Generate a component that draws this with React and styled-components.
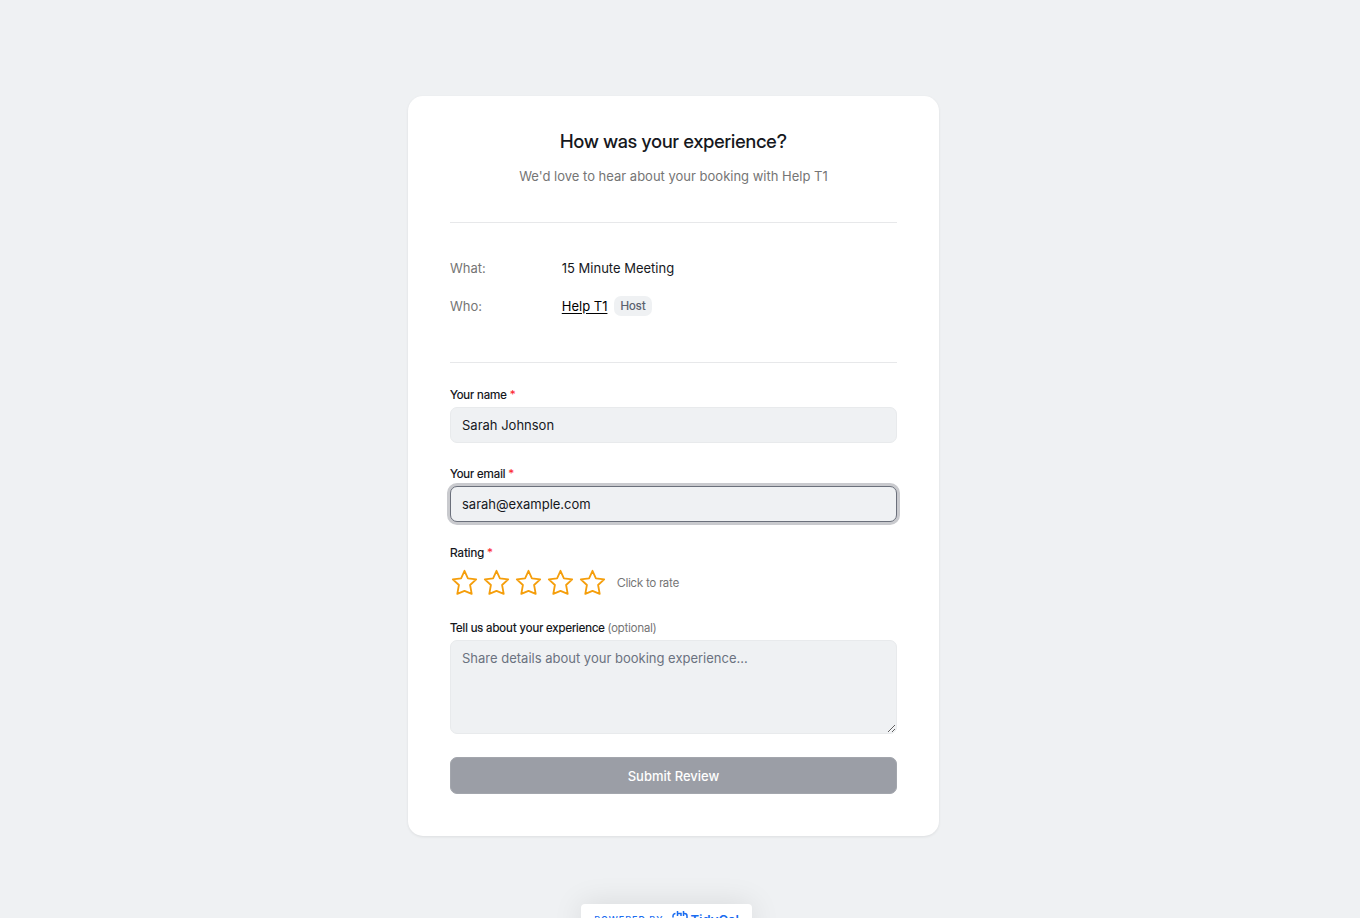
import React, { useState } from 'react'
import styled, { createGlobalStyle } from 'styled-components'

const displayFont = "'Inter Display', Inter, 'Liberation Sans', sans-serif"

const GlobalStyle = createGlobalStyle`
  *, *::before, *::after {
    box-sizing: border-box;
  }
  body {
    margin: 0;
    background: #eff1f3;
    color: #16181d;
    font-family: Inter, 'Liberation Sans', sans-serif;
    font-size: 13px;
    line-height: 20px;
    scrollbar-width: none;
  }
  button, input, textarea {
    font: inherit;
    color: inherit;
  }
`

const Page = styled.div`
  display: flex;
  flex-direction: column;
  align-items: center;
  min-height: 100vh;
  padding: 96px 29px 24px 16px;
`

const Card = styled.main`
  width: 100%;
  max-width: 531px;
  padding: 36px 42px 42px;
  background: #fff;
  border-radius: 15px;
  box-shadow: 0 1px 3px rgba(0, 0, 0, 0.08);
`

const Header = styled.header`
  padding-bottom: 36px;
  border-bottom: 1px solid #e7e8ea;
  text-align: center;
`

const Title = styled.h1`
  margin: 0 0 14px;
  font-family: ${displayFont};
  font-size: 19px;
  font-weight: 500;
  line-height: 20px;
`

const Subtitle = styled.p`
  margin: 0;
  color: #757575;
`

const Details = styled.dl`
  display: grid;
  grid-template-columns: 1fr 3fr;
  row-gap: 18px;
  margin: 0;
  padding: 35px 0 46px;
  border-bottom: 1px solid #e7e8ea;
`

const Term = styled.dt`
  color: #757575;
`

const Value = styled.dd`
  display: flex;
  align-items: center;
  gap: 7px;
  margin: 0;
`

const HostLink = styled.a`
  color: #000;
  text-decoration: underline;
  text-underline-offset: 2px;
`

const Tag = styled.span`
  padding: 0 6px;
  border-radius: 7px;
  background: #eff1f3;
  color: #5b616e;
  font-family: ${displayFont};
  font-size: 12px;
  font-weight: 500;
`

const Form = styled.form`
  display: flex;
  flex-direction: column;
  gap: 23px;
  padding-top: 24px;
`

const Field = styled.div`
  display: flex;
  flex-direction: column;
  gap: 4px;
`

const RatingField = styled.fieldset`
  min-width: 0;
  margin: 0;
  padding: 0;
  border: 0;
`

const Label = styled.label`
  font-family: ${displayFont};
  font-size: 12px;
  font-weight: 500;
  line-height: 16px;
`

const Legend = styled(Label).attrs({ as: 'legend' })`
  padding: 0;
  margin-bottom: 8px;
`

const Required = styled.span`
  color: #fb2c36;
`

const Optional = styled.span`
  color: #757575;
  font-weight: 400;
`

const Input = styled.input`
  width: 100%;
  height: 36px;
  padding: 0 11px;
  border: 1px solid #e8eaec;
  border-radius: 7px;
  outline: none;
  background: #eff1f3;

  &:focus {
    border-color: #6b707b;
    box-shadow: 0 0 0 3px #c9cace;
  }
`

const TextArea = styled(Input).attrs({ as: 'textarea' })`
  display: block;
  height: 94px;
  padding: 7px 11px;
  resize: vertical;

  &::placeholder {
    color: #6b7280;
  }
`

const RatingRow = styled.div`
  display: flex;
  align-items: center;
`

const StarOption = styled.label`
  display: block;
  width: 32px;
  height: 28px;
  cursor: pointer;

  input {
    appearance: none;
    display: block;
    width: 0;
    height: 0;
    margin: 0;
  }

  svg {
    display: block;
    width: 28px;
    height: 28px;
    fill: ${(p) => (p.$active ? '#f59e0b' : 'none')};
    stroke: #f59e0b;
    stroke-width: 1.8;
    stroke-linejoin: round;
  }
`

const RatingHint = styled.span`
  margin-left: 7px;
  color: #757575;
  font-family: ${displayFont};
  font-size: 12px;
`

const SubmitButton = styled.button`
  height: 37px;
  border: 1px solid #a3a6ad;
  border-radius: 7px;
  background: #9b9ea6;
  color: #fff;
  font-weight: 500;
`

const PoweredBy = styled.a`
  display: flex;
  align-items: center;
  gap: 8px;
  margin-top: 68px;
  margin-right: 14px;
  padding: 6px 13px;
  border-radius: 4px;
  background: #fff;
  box-shadow: 0 0 30px rgba(0, 0, 0, 0.1);
  color: #1a6cf0;
  font-size: 9px;
  font-weight: 500;
  letter-spacing: 1px;
  text-decoration: none;
  text-transform: uppercase;
`

const Brand = styled.span`
  display: flex;
  align-items: center;
  gap: 3px;
  font-size: 13px;
  font-weight: 600;
  letter-spacing: normal;
  text-transform: none;
`

const ratings = [1, 2, 3, 4, 5]

function Star() {
  return (
    <svg viewBox="0 0 28 28" aria-hidden="true">
      <path d="M14.500 1.800 L17.900 9.300 L26.200 10.300 L20.100 16 L21.700 24.800 L14.500 21.800 L7.300 24.800 L8.900 16 L2.800 10.300 L11.100 9.300 Z" />
    </svg>
  )
}

function TidyCalIcon() {
  return (
    <svg width="16" height="18" viewBox="0 0 16 18" fill="none" stroke="currentColor" strokeWidth="1.5" aria-hidden="true">
      <path d="M5.500 0v5M5.500 2.500H9v2.500M11.500 0v5M11.500 2.500h1a2.500 2.500 0 0 1 2.500 2.500v8.500a3 3 0 0 1-3 3H4a3 3 0 0 1-3-3M3.500 2.500A2.500 2.500 0 0 0 1 5v1.500M1 8.500v2" />
    </svg>
  )
}

function App() {
  const [rating, setRating] = useState(0)

  return (
    <>
      <GlobalStyle />
      <Page>
        <Card>
          <Header>
            <Title>How was your experience?</Title>
            <Subtitle>We'd love to hear about your booking with Help T1</Subtitle>
          </Header>
          <Details>
            <Term>What:</Term>
            <Value>15 Minute Meeting</Value>
            <Term>Who:</Term>
            <Value>
              <HostLink href="#host">Help T1</HostLink>
              <Tag>Host</Tag>
            </Value>
          </Details>
          <Form onSubmit={(e) => e.preventDefault()}>
            <Field>
              <Label htmlFor="name">
                Your name <Required>*</Required>
              </Label>
              <Input id="name" type="text" defaultValue="Sarah Johnson" />
            </Field>
            <Field>
              <Label htmlFor="email">
                Your email <Required>*</Required>
              </Label>
              <Input id="email" type="email" defaultValue="sarah@example.com" autoFocus />
            </Field>
            <RatingField>
              <Legend>
                Rating <Required>*</Required>
              </Legend>
              <RatingRow>
                {ratings.map((value) => (
                  <StarOption key={value} $active={value <= rating}>
                    <input
                      type="radio"
                      name="rating"
                      aria-label={`${value} stars`}
                      checked={rating === value}
                      onChange={() => setRating(value)}
                    />
                    <Star />
                  </StarOption>
                ))}
                <RatingHint>Click to rate</RatingHint>
              </RatingRow>
            </RatingField>
            <Field>
              <Label htmlFor="details">
                Tell us about your experience <Optional>(optional)</Optional>
              </Label>
              <TextArea id="details" placeholder="Share details about your booking experience..." />
            </Field>
            <SubmitButton type="submit" disabled={!rating}>
              Submit Review
            </SubmitButton>
          </Form>
        </Card>
        <PoweredBy href="#tidycal">
          Powered by
          <Brand>
            <TidyCalIcon />
            TidyCal
          </Brand>
        </PoweredBy>
      </Page>
    </>
  )
}

export default App
